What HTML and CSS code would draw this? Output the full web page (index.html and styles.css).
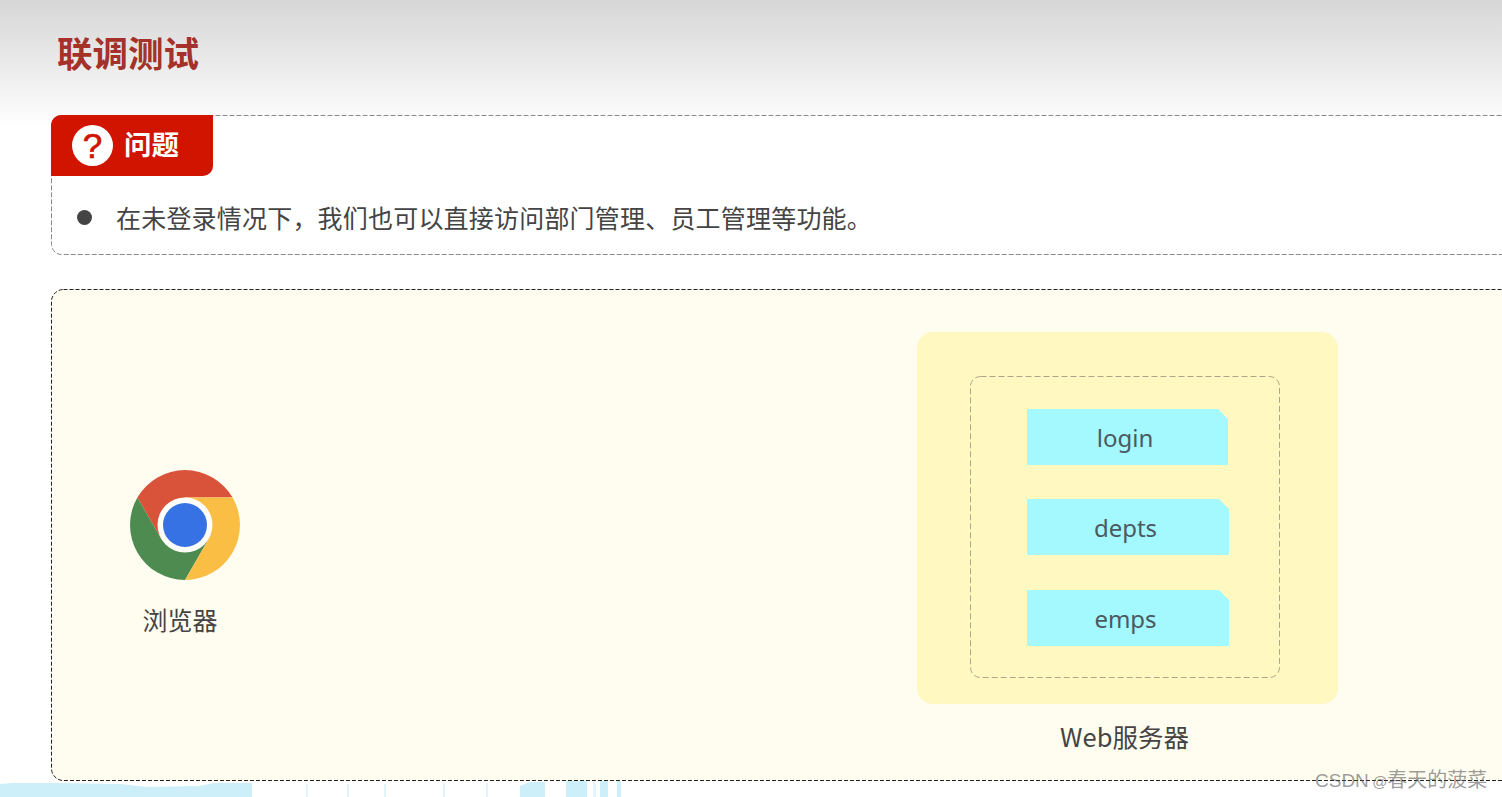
FILE: index.html
```html
<!DOCTYPE html>
<html lang="zh-CN">
<head>
<meta charset="utf-8">
<title>联调测试</title>
<link rel="stylesheet" href="styles.css">
</head>
<body>
<div class="page">
  <h1 class="title">联调测试</h1>
  <section class="question">
    <svg class="outline" width="1500" height="140"><rect class="dash-q" x="0.5" y="0.5" width="1499" height="139" rx="10"/></svg>
    <div class="tab"><span class="tab-icon">?</span><span class="tab-text">问题</span></div>
    <div class="q-row"><span class="bullet"></span><p class="q-text">在未登录情况下，我们也可以直接访问部门管理、员工管理等功能。</p></div>
  </section>
  <section class="diagram">
    <svg class="outline" width="1500" height="492"><rect class="dash-d" x="0.5" y="0.5" width="1499" height="491" rx="12"/></svg>
    <div class="browser">
      <svg class="chrome" width="110" height="110" viewBox="-55 -55 110 110">
        <path fill="#d9533a" d="M-47.6 -27.5A55 55 0 0 1 47.6 -27.5L0 -27.5L-23.8 13.75Z"/>
        <path fill="#4d8b50" d="M-47.6 -27.5A55 55 0 0 0 0 55L23.8 13.75L-23.8 13.75Z"/>
        <path fill="#fbbe45" d="M47.6 -27.5A55 55 0 0 1 0 55L23.8 13.75L0 -27.5Z"/>
        <circle r="27.5" fill="#fffef8"/>
        <circle r="22" fill="#3672e3"/>
      </svg>
      <div class="browser-label">浏览器</div>
    </div>
    <div class="server-col">
      <div class="server">
        <div class="routes">
          <svg class="outline" width="310" height="302"><rect class="dash-r" x="0.5" y="0.5" width="309" height="301" rx="10"/></svg>
          <div class="route route-a">login</div>
          <div class="route route-b">depts</div>
          <div class="route route-b route-c">emps</div>
        </div>
      </div>
      <div class="server-label">Web服务器</div>
    </div>
  </section>
  <svg class="strip" width="1502" height="16" viewBox="0 0 1502 16">
    <path fill="#cceff9" d="M0 3L13 2L60 2L120 3L147 6L200 5L214 2L252 2V16H0Z"/>
    <path fill="#cceff9" d="M520 5L530 1H545V16H520ZM566 0H587V16H566ZM600 0H608V16H600ZM617 0H621V16H617Z"/>
    <path fill="#e2f5fb" d="M306 3H308V16H306ZM347 3H349V16H347ZM384 3H386V16H384ZM443 2H445V16H443ZM486 2H488V16H486ZM593 1H596V16H593Z"/>
  </svg>
  <div class="watermark">CSDN <span class="wm-at">@</span><span class="wm-cjk">春天的菠菜</span></div>
</div>
</body>
</html>
```

FILE: styles.css
```css
* { box-sizing: border-box; }
html, body { margin: 0; padding: 0; }
body {
  width: 1502px;
  height: 797px;
  overflow: hidden;
  background: #fff;
  font-family: "Noto Sans CJK SC", "Noto Sans", sans-serif;
}
.page {
  position: relative;
  width: 1502px;
  height: 797px;
  overflow: hidden;
  background: linear-gradient(#d6d6d6 0, #e6e6e6 50px, #f6f6f6 100px, #fff 128px) no-repeat;
  background-size: 100% 128px;
}
.title {
  margin: 0;
  height: 115px;
  padding-left: 57px;
  font-size: 35.5px;
  line-height: 104px;
  font-weight: 700;
  color: #a5322a;
}
.outline {
  position: absolute;
  left: 0;
  top: 0;
  fill: none;
  stroke-width: 1;
}
.dash-q { stroke: #8a8a8a; stroke-dasharray: 5 2; }
.dash-d { stroke: #222; stroke-dasharray: 4 2; }
.dash-r { stroke: #b0a58a; stroke-dasharray: 6 3; }
.question {
  position: relative;
  width: 1500px;
  height: 140px;
  margin-left: 51px;
  background: #fff;
  border-radius: 10px;
}
.tab {
  position: relative;
  display: flex;
  align-items: center;
  width: 162px;
  height: 61px;
  padding-left: 21px;
  gap: 11px;
  background: #d01400;
  border-radius: 10px 0 10px 0;
}
.tab-icon {
  width: 41px;
  height: 41px;
  border-radius: 50%;
  background: #fff;
  color: #d01400;
  font-family: "Liberation Sans", sans-serif;
  font-size: 35px;
  font-weight: 400;
  -webkit-text-stroke: 0.7px #d01400;
  line-height: 41px;
  text-align: center;
}
.tab-text {
  padding-bottom: 4px;
  color: #fff;
  font-size: 27.5px;
  font-weight: 700;
  line-height: 1;
}
.q-row {
  position: relative;
  display: flex;
  align-items: center;
  height: 83px;
  padding-left: 26px;
}
.bullet {
  width: 15px;
  height: 15px;
  border-radius: 50%;
  background: #444;
}
.q-text {
  margin: 0 0 0 24px;
  padding-bottom: 2px;
  font-size: 25px;
  line-height: 1.2;
  letter-spacing: 0.2px;
  color: #444;
}
.diagram {
  position: relative;
  display: flex;
  align-items: flex-start;
  width: 1500px;
  height: 492px;
  margin: 34px 0 0 51px;
  background: #fffdf0;
  border-radius: 12px;
}
.browser {
  position: relative;
  display: flex;
  flex-direction: column;
  width: 110px;
  margin: 181px 0 0 79px;
}
.chrome { display: block; }
.browser-label {
  width: 100px;
  margin-top: 22px;
  font-size: 25px;
  line-height: 34px;
  text-align: center;
  color: #444;
}
.server-col {
  position: relative;
  display: flex;
  flex-direction: column;
  width: 421px;
  margin: 43px 0 0 677px;
}
.server {
  width: 421px;
  height: 372px;
  padding: 44px 0 0 53px;
  background: #fff8c0;
  border-radius: 16px;
}
.routes {
  position: relative;
  display: flex;
  flex-direction: column;
  gap: 34px;
  width: 310px;
  height: 302px;
  padding: 33px 0 0 57px;
  border-radius: 10px;
}
.route {
  height: 56px;
  font-family: "Noto Sans", sans-serif;
  font-size: 24px;
  line-height: 58px;
  text-align: center;
  color: #4a5a60;
  background: #a4f8ff;
  clip-path: polygon(0 0, calc(100% - 10px) 0, 100% 10px, 100% 100%, 0 100%);
  padding-right: 5px;
}
.route-a { width: 201px; }
.route-b { width: 202px; }
.route-c { margin-top: 1px; }
.server-label {
  width: 415px;
  margin-top: 15px;
  font-size: 25.5px;
  line-height: 34px;
  text-align: center;
  color: #444;
}
.strip { display: block; }
.watermark {
  position: absolute;
  left: 1315px;
  top: 766px;
  font-family: "Liberation Sans", "Noto Sans CJK SC", sans-serif;
  font-size: 19px;
  line-height: 26px;
  word-spacing: -2px;
  color: rgba(90, 90, 90, 0.6);
  white-space: nowrap;
}
.wm-at { font-size: 15px; }
.wm-cjk { font-size: 20px; font-family: "Noto Sans CJK SC", sans-serif; }
```
